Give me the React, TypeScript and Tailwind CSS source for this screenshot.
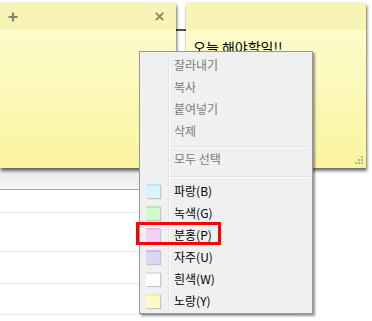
import React from 'react';

type Swatch = { label: string; body: string; top: string };

const swatches: Swatch[] = [
  { label: '파랑(B)', body: 'bg-[#d9f4fa]', top: 'border-[#bfe5ef]' },
  { label: '녹색(G)', body: 'bg-[#d0fbc9]', top: 'border-[#b6ecac]' },
  { label: '분홍(P)', body: 'bg-[#f6d0f4]', top: 'border-[#ecb9e8]' },
  { label: '자주(U)', body: 'bg-[#ddd5f6]', top: 'border-[#c9bdef]' },
  { label: '흰색(W)', body: 'bg-[#fdfdfd]', top: 'border-[#e2e2e2]' },
  { label: '노랑(Y)', body: 'bg-[#fdfac9]', top: 'border-[#f3eea6]' },
];

function Row({ icon, children, disabled }: { icon?: React.ReactNode; children: React.ReactNode; disabled?: boolean }) {
  return (
    <div className="flex h-[22px]">
      <div className="w-[29px] border-r border-[#e2e3e3] flex items-center pl-[6px]">{icon}</div>
      <div
        className={`flex-1 border-l border-white flex items-center pl-[4px] text-[12px] ${
          disabled ? 'text-[#7a7a7a]' : 'text-black'
        }`}
      >
        {children}
      </div>
    </div>
  );
}

function Separator({ top, bottom }: { top: string; bottom: string }) {
  return (
    <div className="flex">
      <div className="w-[29px] border-r border-[#e2e3e3]" />
      <div className={`flex-1 border-l border-white pr-[2px] ${top} ${bottom}`}>
        <div className="h-px bg-[#e0e0e0]" />
        <div className="h-px bg-white" />
      </div>
    </div>
  );
}

function Spacer({ h }: { h: string }) {
  return (
    <div className={`flex ${h}`}>
      <div className="w-[29px] border-r border-[#e2e3e3]" />
      <div className="flex-1 border-l border-white" />
    </div>
  );
}

function Grip() {
  return (
    <svg width="8" height="8" viewBox="0 0 8 8">
      {[
        [6, 0],
        [3, 3],
        [6, 3],
        [0, 6],
        [3, 6],
        [6, 6],
      ].map(([x, y], i) => (
        <rect key={i} x={x} y={y} width="2" height="2" fill="#b5b28f" />
      ))}
    </svg>
  );
}

export default function App() {
  return (
    <div className="relative w-[372px] h-[321px] overflow-hidden bg-white font-['Noto_Sans_CJK_KR','Noto_Sans',sans-serif]">
      {/* window behind the notes */}
      <div className="w-[300px] flex flex-col">
        <div className="h-[29px]" />
        <div className="h-[2px] bg-[#4f4f4f]" />
        <div className="h-[137px]" />
        <div className="h-[22px] bg-gradient-to-b from-[#e6e6e6] to-[#f8f8f8] border-b border-[#a3a3a3]" />
        <div className="h-[23px] border-b border-[#e6e6e6]" />
        <div className="h-[39px] border-b border-[#e6e6e6]" />
        <div className="h-[32px] border-b border-[#e6e6e6]" />
        <div className="h-[31px] border-b border-[#e6e6e6]" />
      </div>

      {/* note 1 */}
      <div className="absolute left-0 top-[3px] w-[176px] h-[165px] flex flex-col shadow-[0_0_1px_rgba(0,0,0,0.35),1px_3px_3px_rgba(0,0,0,0.55)]">
        <div className="h-[27px] bg-[#f7f4b5] flex items-center justify-between pl-[8px] pr-[12px]">
          <svg width="10" height="10" viewBox="0 0 10 10">
            <path d="M5 0.5V9.5M0.5 5H9.5" stroke="#858368" strokeWidth="2.2" />
          </svg>
          <svg width="9" height="9" viewBox="0 0 9 9">
            <path d="M0.8 0.8L8.2 8.2M8.2 0.8L0.8 8.2" stroke="#858368" strokeWidth="1.8" />
          </svg>
        </div>
        <div className="flex-1 bg-gradient-to-b from-[#fdfccb] to-[#faf49f]" />
      </div>

      {/* note 2 */}
      <div className="absolute left-[186px] top-[3px] w-[180px] h-[165px] flex flex-col shadow-[0_0_1px_rgba(0,0,0,0.35),1px_3px_3px_rgba(0,0,0,0.55)]">
        <div className="h-[27px] bg-[#f7f4b5]" />
        <div className="flex-1 flex flex-col bg-gradient-to-b from-[#fdfccb] to-[#faf49f]">
          <div className="pl-[7px] pt-[7px] text-[14px] leading-[20px] text-black">오늘 해야할일!!</div>
          <div className="flex-1" />
          <div className="flex justify-end pr-[3px] pb-[4px]">
            <Grip />
          </div>
        </div>
      </div>

      {/* context menu */}
      <div className="absolute left-[139px] top-[51px] w-[174px] bg-[#f0f0f0] border border-[#979797] shadow-[2px_2px_2px_rgba(0,0,0,0.4)] flex flex-col">
        <Spacer h="h-[2px]" />
        <Row disabled>잘라내기</Row>
        <Row disabled>복사</Row>
        <Row disabled>붙여넣기</Row>
        <Row disabled>삭제</Row>
        <Separator top="pt-[4px]" bottom="pb-0" />
        <Row disabled>모두 선택</Row>
        <Separator top="pt-[6px]" bottom="pb-[2px]" />
        {swatches.map((s) => (
          <Row
            key={s.label}
            icon={
              <div
                className={`w-[14px] h-[14px] border-t-2 ${s.top} ${s.body} shadow-[1px_1px_1px_rgba(0,0,0,0.18)]`}
              />
            }
          >
            {s.label}
          </Row>
        ))}
        <Spacer h="h-px" />
      </div>

      {/* highlight */}
      <div className="absolute left-[136px] top-[222px] w-[85px] h-[23px] border-[3px] border-[#ff0000]" />
    </div>
  );
}
